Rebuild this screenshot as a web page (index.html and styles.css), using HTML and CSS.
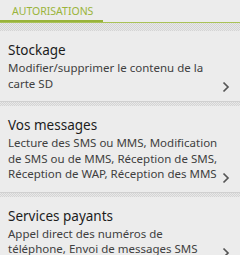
FILE: index.html
```html
<!DOCTYPE html>
<html>
<head>
<meta charset="utf-8">
<link rel="stylesheet" href="styles.css">
</head>
<body>
<div class="tabs">
  <div class="tab">AUTORISATIONS</div>
</div>
<div class="hatch hatch-top"></div>
<div class="item">
  <div class="text">
    <div class="title">Stockage</div>
    <div class="sub">Modifier/supprimer le contenu de la carte SD</div>
  </div>
  <svg class="chev" width="8" height="12" viewBox="0 0 8 12"><path d="M1.5 1.5 L6 6 L1.5 10.5" fill="none" stroke="#555" stroke-width="1.7"/></svg>
</div>
<div class="hatch"></div>
<div class="item">
  <div class="text">
    <div class="title">Vos messages</div>
    <div class="sub">Lecture des SMS ou MMS, Modification de SMS ou de MMS, Réception de SMS, Réception de WAP, Réception des MMS</div>
  </div>
  <svg class="chev" width="8" height="12" viewBox="0 0 8 12"><path d="M1.5 1.5 L6 6 L1.5 10.5" fill="none" stroke="#555" stroke-width="1.7"/></svg>
</div>
<div class="hatch"></div>
<div class="item">
  <div class="text">
    <div class="title">Services payants</div>
    <div class="sub">Appel direct des numéros de téléphone, Envoi de messages SMS</div>
  </div>
  <svg class="chev" width="8" height="12" viewBox="0 0 8 12"><path d="M1.5 1.5 L6 6 L1.5 10.5" fill="none" stroke="#555" stroke-width="1.7"/></svg>
</div>
</body>
</html>
```
FILE: styles.css
```css
html, body {
  margin: 0;
  padding: 0;
  background: #ececec;
  font-family: "Noto Sans", "Open Sans", sans-serif;
  overflow: hidden;
}
.tabs {
  border-bottom: 1px solid #a9c256;
}
.tab {
  width: 91px;
  padding-left: 12px;
  height: 18px;
  line-height: 18px;
  padding-top: 2px;
  font-size: 10.5px;
  color: #9ab43b;
  border-bottom: 2px solid #99b33a;
  box-sizing: content-box;
}
.hatch {
  height: 4px;
  background-color: #e2e2e2;
  background-image: repeating-conic-gradient(#d4d4d4 0 25%, #e8e8e8 0 50%);
  background-size: 2px 2px;
  border-top: 1px solid #d0d0d0;
}
.hatch-top {
  height: 8px;
  border-top: none;
}
.item {
  display: flex;
  align-items: flex-end;
  padding: 11px 10px 10px 8px;
}
.text {
  flex: 1;
  min-width: 0;
  margin-right: 3px;
}
.title {
  font-size: 13.5px;
  line-height: 16px;
  color: #1c1c1c;
  margin-bottom: 2px;
}
.sub {
  font-size: 11.5px;
  line-height: 15.5px;
  color: #404040;
}
.chev {
  flex: none;
  margin-bottom: -2px;
}
```
